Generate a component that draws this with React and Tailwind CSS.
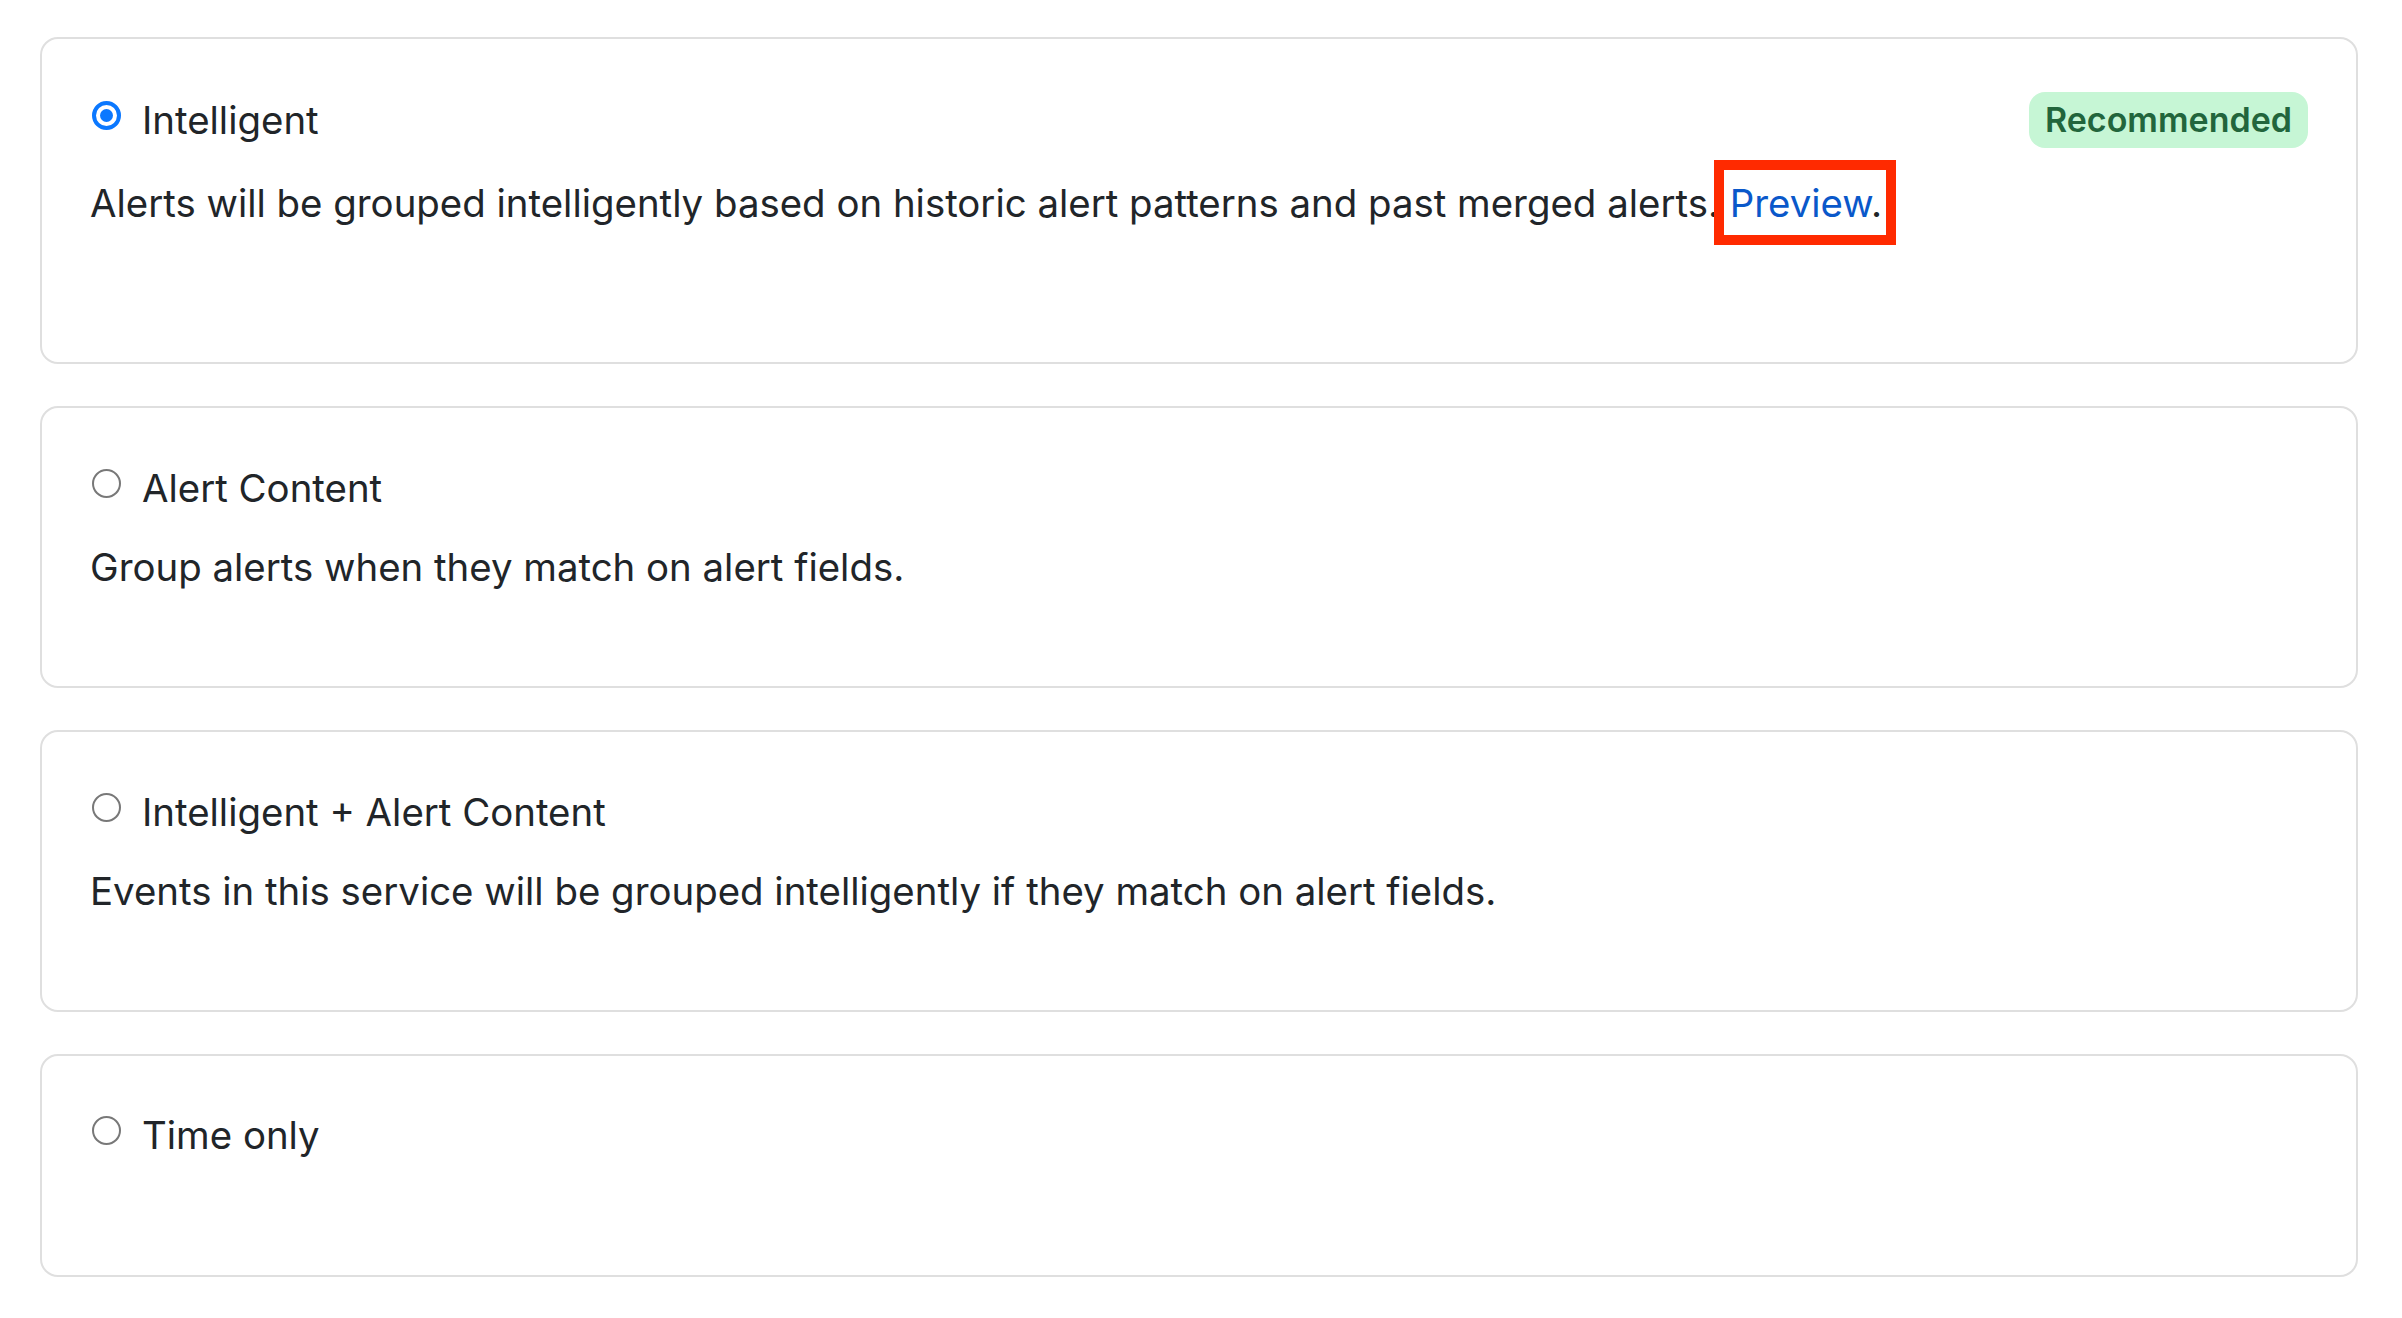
import React from "react";

// Native-looking radio button
const Radio = ({ checked }) =>
  checked ? (
    <span className="mt-[5px] flex h-[29px] w-[29px] shrink-0 items-center justify-center rounded-full border-[4px] border-[#0b78ff] bg-white">
      <span className="h-[13px] w-[13px] rounded-full bg-[#0b78ff]" />
    </span>
  ) : (
    <span className="mt-[5px] h-[29px] w-[29px] shrink-0 rounded-full border-[2.5px] border-[#787878] bg-white" />
  );

const App = () => {
  const options = [
    {
      id: "intelligent",
      title: "Intelligent",
      checked: true,
      badge: "Recommended",
      description: (
        <>
          Alerts will be grouped intelligently based on historic alert patterns and past merged alerts.{" "}
          <span className="relative inline-block">
            <a href="#" className="text-[#0a58ca]">Preview</a>.
            <span className="pointer-events-none absolute -left-[16px] -right-[14px] -top-[19px] -bottom-[18px] border-[10px] border-[#ff2a00]" />
          </span>
        </>
      ),
      pad: "pt-[53px] pb-[135px]",
    },
    {
      id: "content",
      title: "Alert Content",
      description: "Group alerts when they match on alert fields.",
      pad: "pt-[56px] pb-[95px]",
    },
    {
      id: "both",
      title: "Intelligent + Alert Content",
      description: "Events in this service will be grouped intelligently if they match on alert fields.",
      pad: "pt-[56px] pb-[95px]",
    },
    {
      id: "time",
      title: "Time only",
      pad: "pt-[55px] pb-[116px]",
    },
  ];

  return (
    <div className="min-h-screen bg-white pt-[37px] font-[Inter,sans-serif] text-[38.4px] leading-[48px] text-[#212529]">
      <div className="ml-[40px] flex w-[2318px] flex-col gap-[42px]">
        {options.map((opt) => (
          <div
            key={opt.id}
            className={`rounded-[18px] border-2 border-[#dfdfdf] bg-white pl-[50px] pr-[48px] ${opt.pad}`}
          >
            <div className={`flex justify-between ${opt.badge ? "h-[56px] items-center" : "items-start"}`}>
              <label className="flex items-start gap-[21px]">
                <Radio checked={opt.checked} />
                <span>{opt.title}</span>
              </label>
              {opt.badge && (
                <span className="flex h-[56px] items-center rounded-[16px] bg-[#c6f6d5] px-[16px] text-[34px] font-semibold text-[#22653c]">
                  {opt.badge}
                </span>
              )}
            </div>
            {opt.description && <p className="mt-[31px] -ml-[2px]">{opt.description}</p>}
          </div>
        ))}
      </div>
    </div>
  );
};

export default App;
